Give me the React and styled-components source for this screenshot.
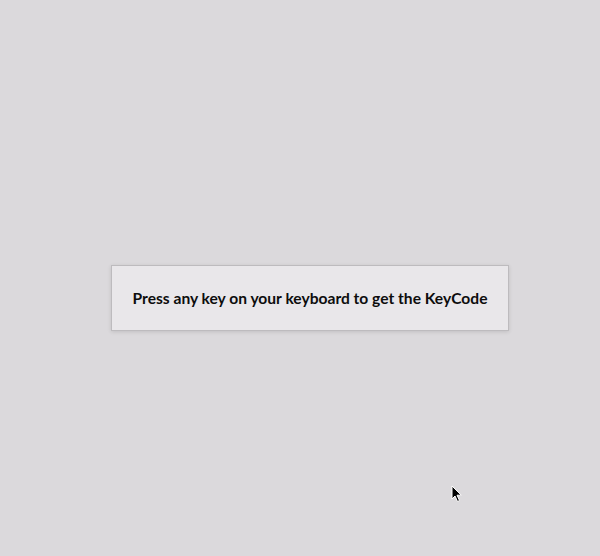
import React from 'react'
import styled, { createGlobalStyle } from 'styled-components'

const GlobalStyle = createGlobalStyle`
    html, body {
        margin: 0;
        padding: 0;
        background: #dbd9dc;
    }
    body {
        font-family: "Lato", "Noto Sans", sans-serif;
    }
`

const Page = styled.div`
    position: relative;
    display: flex;
    justify-content: center;
    align-items: center;
    box-sizing: border-box;
    width: 100vw;
    height: 100vh;
    padding: 40px 0 0 20px;
    overflow: hidden;
`

const KeyBox = styled.div`
    box-sizing: border-box;
    width: 398px;
    height: 66px;
    display: flex;
    justify-content: center;
    align-items: center;
    background: #e9e7ea;
    border: 1px solid #bdbbbe;
    box-shadow: 0 1px 4px rgba(0, 0, 0, 0.12);
`

const Message = styled.p`
    margin: 0;
    font-size: 15.6px;
    font-weight: 700;
    color: #0d0d0d;
    line-height: 1;
    padding-top: 1px;
`

const Cursor = styled.svg`
    position: absolute;
    left: 451px;
    top: 485px;
    width: 12px;
    height: 18px;
`

let App = () => {
    return (
        <Page>
            <GlobalStyle />
            <KeyBox>
                <Message>Press any key on your keyboard to get the KeyCode</Message>
            </KeyBox>
            <Cursor viewBox="0 0 12 18">
                <path
                    d="M1 1 L1 14 L4 11 L6.5 16.5 L8.5 15.5 L6 10.2 L10.3 10.2 Z"
                    fill="#000"
                    stroke="#fff"
                    strokeWidth="1"
                    strokeLinejoin="round"
                />
            </Cursor>
        </Page>
    )
}

export default App
